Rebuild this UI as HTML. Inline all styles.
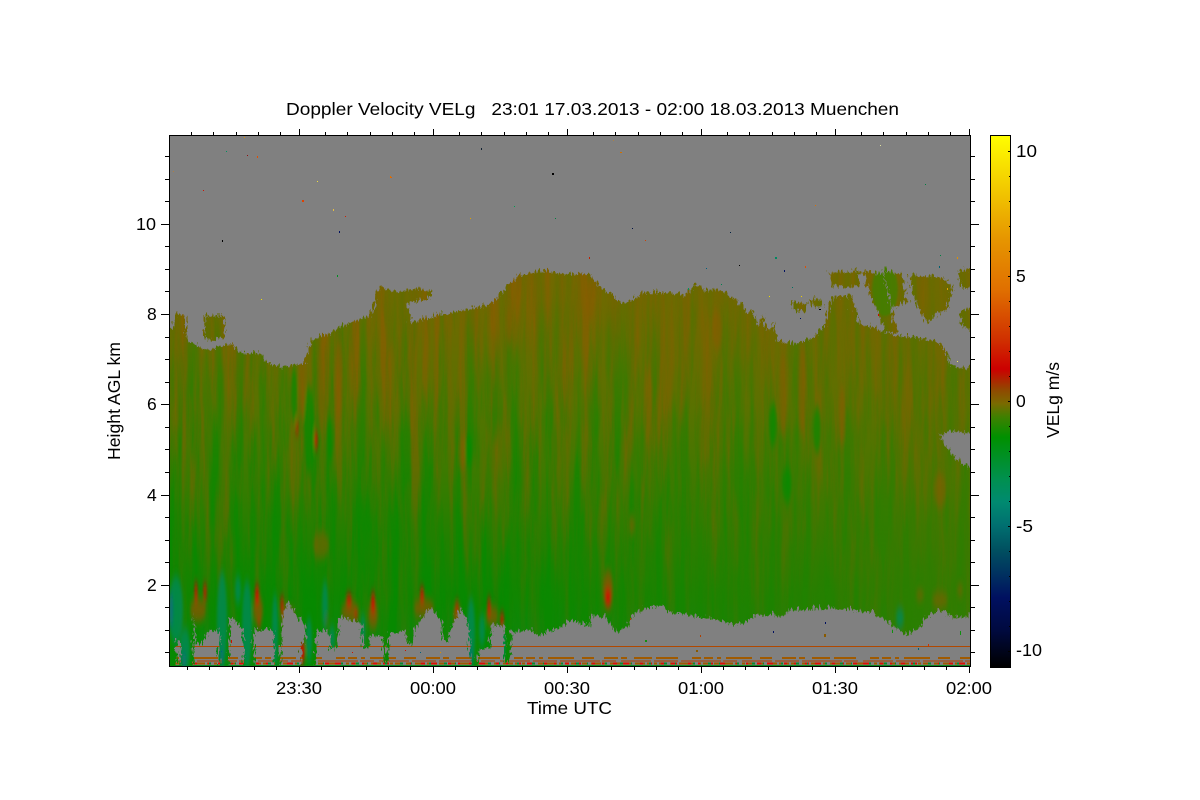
<!DOCTYPE html>
<html><head><meta charset="utf-8"><title>Doppler Velocity</title>
<style>html,body{margin:0;padding:0;background:#fff;width:1200px;height:800px;overflow:hidden}svg{display:block}text{font-family:"Liberation Sans",sans-serif;font-size:17.5px;fill:#000}</style>
</head><body>
<svg width="1200" height="800" viewBox="0 0 1200 800" xmlns="http://www.w3.org/2000/svg">
<defs>
<linearGradient id="base" x1="0" y1="260" x2="0" y2="666" gradientUnits="userSpaceOnUse">
<stop offset="0" stop-color="#746800"/><stop offset=".2" stop-color="#686c00"/><stop offset=".35" stop-color="#587200"/><stop offset=".52" stop-color="#3c7a00"/><stop offset=".68" stop-color="#228000"/><stop offset=".82" stop-color="#0f8600"/><stop offset="1" stop-color="#058a10"/>
</linearGradient>
<linearGradient id="galpha" x1="0" y1="300" x2="0" y2="600" gradientUnits="userSpaceOnUse">
<stop offset="0" stop-color="#000" stop-opacity=".15"/><stop offset=".45" stop-color="#000" stop-opacity=".6"/><stop offset="1" stop-color="#000" stop-opacity=".9"/>
</linearGradient>
<linearGradient id="balpha" x1="0" y1="300" x2="0" y2="600" gradientUnits="userSpaceOnUse">
<stop offset="0" stop-color="#000" stop-opacity=".9"/><stop offset=".5" stop-color="#000" stop-opacity=".55"/><stop offset="1" stop-color="#000" stop-opacity=".2"/>
</linearGradient>
<linearGradient id="rightolive" x1="500" y1="0" x2="970" y2="0" gradientUnits="userSpaceOnUse">
<stop offset="0" stop-color="#6a6c00" stop-opacity="0"/><stop offset="1" stop-color="#6a6c00" stop-opacity=".4"/>
</linearGradient>
<linearGradient id="cb" x1="0" y1="135" x2="0" y2="667" gradientUnits="userSpaceOnUse">
<stop offset="0" stop-color="#ffff00"/><stop offset=".197" stop-color="#e69500"/><stop offset=".29" stop-color="#e07000"/><stop offset=".385" stop-color="#d03000"/><stop offset=".44" stop-color="#cc0000"/><stop offset=".48" stop-color="#8f4a00"/><stop offset=".505" stop-color="#7a6a00"/><stop offset=".53" stop-color="#3f8000"/><stop offset=".568" stop-color="#009000"/><stop offset=".648" stop-color="#009050"/><stop offset=".69" stop-color="#008a70"/><stop offset=".733" stop-color="#007070"/><stop offset=".78" stop-color="#005060"/><stop offset=".827" stop-color="#003060"/><stop offset=".87" stop-color="#001060"/><stop offset=".93" stop-color="#000a40"/><stop offset="1" stop-color="#000000"/>
</linearGradient>
<filter id="bn" filterUnits="userSpaceOnUse" x="169" y="135" width="802" height="532" color-interpolation-filters="sRGB">
<feTurbulence type="fractalNoise" baseFrequency="0.1 0.006" numOctaves="4" seed="4"/>
<feColorMatrix values="0 0 0 0 .52  0 0 0 0 .37  0 0 0 0 0  3.2 0 0 0 -1.25"/>
<feComposite in2="SourceAlpha" operator="in"/>
</filter>
<filter id="gn" filterUnits="userSpaceOnUse" x="169" y="135" width="802" height="532" color-interpolation-filters="sRGB">
<feTurbulence type="fractalNoise" baseFrequency="0.09 0.007" numOctaves="4" seed="17"/>
<feColorMatrix values="0 0 0 0 .02  0 0 0 0 .54  0 0 0 0 0  3.2 0 0 0 -1.25"/>
<feComposite in2="SourceAlpha" operator="in"/>
</filter>
<filter id="rag" filterUnits="userSpaceOnUse" x="0" y="0" width="1200" height="800">
<feTurbulence type="turbulence" baseFrequency="0.32 0.11" numOctaves="2" seed="8" result="n"/>
<feDisplacementMap in="SourceGraphic" in2="n" scale="10" xChannelSelector="R" yChannelSelector="G"/>
</filter>
<filter id="bv" filterUnits="userSpaceOnUse" x="0" y="0" width="1200" height="800"><feGaussianBlur stdDeviation="1.3 5"/></filter>
<filter id="bs" filterUnits="userSpaceOnUse" x="0" y="0" width="1200" height="800"><feGaussianBlur stdDeviation="1"/></filter>
<mask id="echo" maskUnits="userSpaceOnUse" x="0" y="0" width="1200" height="800">
<g filter="url(#rag)" fill="#fff">
<polygon points="169,327 174,310 184,313 184,335 202,348 212,345 229,340 239,350 256,350 266,360 279,365 302,360 309,337 329,330 346,320 369,313 376,284 395,289 410,286 428,288 428,294 405,302 410,320 436,312 489,302 496,293 516,273 540,268 569,272 580,270 590,275 603,290 623,300 643,290 667,290 683,293 693,280 703,288 717,287 733,297 740,303 745,312 750,306 755,323 760,310 765,329 771,320 775,338 787,341 807,338 823,322 830,295 848,293 857,320 890,332 933,338 943,347 947,362 975,368 975,612 950,615 937,607 923,615 917,625 903,632 887,620 870,610 830,605 787,608 777,613 752,612 743,620 730,622 703,615 670,610 658,602 640,607 630,612 625,623 615,630 603,615 590,612 587,623 569,618 556,625 536,633 529,627 509,630 507,660 501,660 502,623 489,622 487,645 476,647 474,672 469,672 466,622 459,605 447,627 446,638 441,638 439,617 426,605 412,627 409,643 407,643 402,630 386,630 385,660 381,660 379,633 367,633 366,645 361,645 359,620 336,615 335,647 329,647 328,630 314,627 313,672 299,672 298,640 304,640 303,622 284,600 279,620 278,672 271,672 271,627 252,627 252,672 241,672 241,627 227,615 227,672 217,672 217,627 206,628 199,642 193,642 191,610 190,672 179,672 178,637 174,637 174,672 165,672 165,327"/>
<polygon points="202,313 222,313 222,335 210,338 202,335"/>
<polygon points="827,270 857,268 857,283 830,285"/>
<polygon points="860,268 880,272 895,330 885,330 870,300"/>
<polygon points="880,268 900,272 905,300 890,305"/>
<polygon points="907,272 940,275 950,285 945,305 925,320 910,295"/>
<polygon points="957,308 975,306 975,332 960,322"/>
<polygon points="955,268 975,266 975,285 960,285"/>
<polygon points="790,300 803,301 802,309 792,309"/>
<polygon points="808,297 820,296 821,303 810,304"/>
</g>
<polygon points="937,433 950,428 975,432 975,470 955,458 945,445" fill="#000" filter="url(#rag)"/>
</mask>
<clipPath id="plot"><rect x="170" y="136" width="800" height="530"/></clipPath>
</defs>
<rect width="1200" height="800" fill="#fff"/>
<g clip-path="url(#plot)">
<rect x="169" y="135" width="802" height="532" fill="#808080"/>
<!-- range-gate artifacts -->
<rect x="175" y="646" width="795" height="1" fill="#b04800"/>
<g fill="none" shape-rendering="crispEdges">
<line x1="170" x2="970" y1="658" y2="658" stroke="#a05a00" stroke-width="2" stroke-dasharray="9 4 4 5 26 8 12 10 14 3 6 7 18 4 22 14 9 3"/>
<line x1="170" x2="970" y1="661" y2="661" stroke="#b04000" stroke-width="1" stroke-dasharray="24 3 40 2 14 5 30 3"/>
<line x1="170" x2="970" y1="663.5" y2="663.5" stroke="#a05a00" stroke-width="2" stroke-dasharray="3 2 8 3 5 4 10 2 4 3"/>
<line x1="170" x2="970" y1="663.5" y2="663.5" stroke="#dd1100" stroke-width="2" stroke-dasharray="2 9 4 6 6 11 3 7"/>
<line x1="170" x2="970" y1="663.5" y2="663.5" stroke="#0a8a30" stroke-width="2" stroke-dasharray="2 13 3 8 1 17" stroke-dashoffset="5"/>
<line x1="170" x2="970" y1="665.5" y2="665.5" stroke="#0a8a20" stroke-width="1"/>
</g>
<!-- echo -->
<g mask="url(#echo)">
<rect x="169" y="135" width="802" height="532" fill="url(#base)"/>
<rect x="169" y="135" width="802" height="532" fill="url(#balpha)" filter="url(#bn)"/>
<rect x="169" y="135" width="802" height="532" fill="url(#galpha)" filter="url(#gn)"/>
<rect x="500" y="260" width="471" height="407" fill="url(#rightolive)"/>
<g filter="url(#bv)">
<!-- brown streaks -->
<g fill="#8a5a00" opacity=".55">
<ellipse cx="321" cy="385" rx="4" ry="48"/><ellipse cx="339" cy="380" rx="4" ry="40"/><ellipse cx="302" cy="390" rx="3" ry="28"/>
<ellipse cx="783" cy="395" rx="4" ry="42"/><ellipse cx="802" cy="390" rx="4" ry="45"/><ellipse cx="842" cy="415" rx="3" ry="30"/>
<ellipse cx="590" cy="300" rx="4" ry="22"/><ellipse cx="717" cy="330" rx="5" ry="20"/><ellipse cx="509" cy="325" rx="3" ry="20"/>
<ellipse cx="462" cy="452" rx="3" ry="18"/><ellipse cx="321" cy="545" rx="8" ry="14"/><ellipse cx="940" cy="490" rx="6" ry="18"/>
<ellipse cx="940" cy="600" rx="8" ry="8"/><ellipse cx="960" cy="590" rx="3" ry="6"/><ellipse cx="920" cy="595" rx="4" ry="6"/>
<ellipse cx="632" cy="525" rx="3" ry="10"/>
</g>
<!-- green streaks -->
<g fill="#008c00" opacity=".7">
<ellipse cx="294" cy="395" rx="3" ry="28"/><ellipse cx="309" cy="430" rx="5" ry="44"/><ellipse cx="817" cy="430" rx="4" ry="24"/><ellipse cx="773" cy="425" rx="4" ry="22"/>
<ellipse cx="469" cy="450" rx="4" ry="16"/><ellipse cx="787" cy="485" rx="5" ry="18"/><ellipse cx="330" cy="440" rx="3" ry="22"/>
</g>
<!-- brown fringes above arches -->
<g fill="#8e5200" opacity=".75">
<ellipse cx="198" cy="610" rx="8" ry="12"/><ellipse cx="258" cy="610" rx="5" ry="14"/><ellipse cx="288" cy="616" rx="7" ry="10"/><ellipse cx="350" cy="612" rx="9" ry="10"/><ellipse cx="373" cy="615" rx="5" ry="14"/><ellipse cx="424" cy="608" rx="10" ry="10"/><ellipse cx="457" cy="615" rx="4" ry="12"/><ellipse cx="492" cy="616" rx="6" ry="10"/><ellipse cx="608" cy="590" rx="5" ry="20"/>
</g>
<!-- red cores -->
<g fill="#cc1000">
<ellipse cx="196" cy="592" rx="1.5" ry="10"/><ellipse cx="205" cy="592" rx="1.5" ry="9"/><ellipse cx="257" cy="595" rx="2" ry="10"/><ellipse cx="282" cy="605" rx="1.5" ry="9"/><ellipse cx="349" cy="600" rx="3" ry="6"/><ellipse cx="373" cy="603" rx="2" ry="11"/><ellipse cx="422" cy="595" rx="2" ry="8"/><ellipse cx="457" cy="607" rx="1.5" ry="6"/><ellipse cx="489" cy="607" rx="1.5" ry="10"/><ellipse cx="502" cy="620" rx="2" ry="7"/><ellipse cx="326" cy="620" rx="1.5" ry="5"/><ellipse cx="356" cy="615" rx="1.5" ry="5"/><ellipse cx="259" cy="623" rx="1.5" ry="4"/><ellipse cx="316" cy="440" rx="1.5" ry="10"/><ellipse cx="297" cy="428" rx="1" ry="7"/><ellipse cx="302" cy="652" rx="3" ry="11"/><ellipse cx="608" cy="597" rx="3" ry="9"/>
</g>
<!-- teal drips -->
<g fill="#058a55" opacity=".8">
<ellipse cx="176" cy="610" rx="7" ry="34"/><ellipse cx="185" cy="650" rx="5" ry="22"/><ellipse cx="222" cy="620" rx="5" ry="48"/><ellipse cx="247" cy="625" rx="5" ry="44"/><ellipse cx="275" cy="630" rx="3" ry="36"/><ellipse cx="325" cy="605" rx="3" ry="24"/><ellipse cx="332" cy="638" rx="3" ry="12"/><ellipse cx="363" cy="630" rx="2.5" ry="16"/><ellipse cx="471" cy="632" rx="4" ry="34"/><ellipse cx="482" cy="630" rx="3" ry="16"/><ellipse cx="503" cy="645" rx="2.5" ry="16"/><ellipse cx="238" cy="590" rx="3" ry="14"/><ellipse cx="900" cy="618" rx="4" ry="10"/><ellipse cx="309" cy="640" rx="3" ry="22"/>
</g>
<g fill="#086a80" opacity=".8">
<ellipse cx="171" cy="610" rx="2" ry="18"/><ellipse cx="184" cy="660" rx="2" ry="7"/><ellipse cx="222" cy="657" rx="1.5" ry="9"/><ellipse cx="471" cy="657" rx="1.5" ry="9"/>
</g>
</g>
<!-- greener upper-right cloud strips -->
<ellipse cx="885" cy="290" rx="13" ry="26" fill="#3f8000" opacity=".8" filter="url(#bs)"/>
</g>
<!-- specks -->
<g shape-rendering="crispEdges">
<rect x="244" y="137" width="1" height="1" fill="#e09000"/><rect x="226" y="151" width="1" height="1" fill="#009060"/><rect x="247" y="155" width="1" height="1" fill="#901010"/><rect x="257" y="156" width="1" height="2" fill="#e05000"/><rect x="173" y="171" width="1" height="1" fill="#b08040"/><rect x="203" y="190" width="1" height="1" fill="#d01000"/><rect x="317" y="181" width="1" height="1" fill="#f0e040"/><rect x="302" y="200" width="2" height="2" fill="#e04000"/><rect x="333" y="209" width="1" height="2" fill="#e8c040"/><rect x="345" y="216" width="1" height="1" fill="#d02000"/><rect x="339" y="231" width="1" height="2" fill="#001060"/><rect x="390" y="176" width="1" height="2" fill="#e07000"/>
<rect x="552" y="173" width="2" height="2" fill="#000"/><rect x="481" y="148" width="1" height="2" fill="#102030"/><rect x="620" y="152" width="2" height="1" fill="#d07000"/><rect x="613" y="140" width="1" height="1" fill="#b08040"/><rect x="222" y="240" width="1" height="2" fill="#000"/><rect x="880" y="145" width="1" height="1" fill="#e0e0a0"/><rect x="925" y="184" width="1" height="1" fill="#008040"/><rect x="632" y="228" width="1" height="1" fill="#001040"/><rect x="555" y="218" width="1" height="1" fill="#008040"/><rect x="514" y="206" width="1" height="1" fill="#00a050"/><rect x="645" y="240" width="1" height="1" fill="#d04000"/><rect x="815" y="205" width="1" height="1" fill="#e07000"/><rect x="391" y="177" width="1" height="1" fill="#e06000"/><rect x="730" y="232" width="1" height="1" fill="#002040"/><rect x="470" y="218" width="1" height="1" fill="#e0a000"/>
<rect x="589" y="257" width="1" height="2" fill="#c02000"/><rect x="775" y="257" width="2" height="2" fill="#008860"/><rect x="706" y="268" width="1" height="1" fill="#006080"/><rect x="739" y="265" width="1" height="1" fill="#000"/><rect x="784" y="270" width="1" height="2" fill="#001060"/><rect x="805" y="266" width="1" height="2" fill="#e05000"/><rect x="940" y="255" width="1" height="1" fill="#008040"/><rect x="939" y="266" width="1" height="2" fill="#006070"/><rect x="957" y="257" width="1" height="2" fill="#e09000"/><rect x="947" y="288" width="1" height="2" fill="#e0a000"/><rect x="957" y="361" width="1" height="1" fill="#f0f060"/><rect x="769" y="296" width="1" height="1" fill="#f0e000"/><rect x="801" y="296" width="1" height="1" fill="#f0d000"/><rect x="819" y="309" width="2" height="1" fill="#000"/><rect x="800" y="318" width="1" height="1" fill="#001060"/><rect x="878" y="314" width="1" height="2" fill="#c01000"/><rect x="688" y="288" width="1" height="2" fill="#009060"/><rect x="721" y="284" width="1" height="1" fill="#008050"/><rect x="792" y="287" width="1" height="1" fill="#007060"/><rect x="337" y="275" width="1" height="2" fill="#009020"/><rect x="261" y="299" width="1" height="1" fill="#f0e000"/>
<rect x="825" y="622" width="1" height="2" fill="#001060"/><rect x="773" y="631" width="1" height="2" fill="#001060"/><rect x="645" y="640" width="2" height="2" fill="#109010"/><rect x="700" y="635" width="1" height="2" fill="#b04000"/><rect x="824" y="634" width="2" height="3" fill="#8a5a00"/><rect x="696" y="650" width="2" height="2" fill="#8a5a00"/><rect x="960" y="631" width="1" height="4" fill="#109010"/><rect x="892" y="630" width="1" height="3" fill="#109010"/><rect x="918" y="648" width="1" height="2" fill="#006070"/><rect x="928" y="644" width="1" height="2" fill="#d03000"/><rect x="630" y="618" width="1" height="2" fill="#b04000"/><rect x="678" y="613" width="1" height="1" fill="#109010"/>
<rect x="221" y="651" width="1" height="1" fill="#006080"/><rect x="352" y="652" width="1" height="1" fill="#cc1000"/><rect x="420" y="652" width="1" height="1" fill="#006080"/><rect x="231" y="640" width="1" height="3" fill="#cc1000"/><rect x="405" y="650" width="1" height="1" fill="#cc1000"/><rect x="440" y="652" width="1" height="1" fill="#e09000"/>
</g>
</g>
<!-- frame -->
<g fill="none" stroke="#000" stroke-width="1" shape-rendering="crispEdges">
<rect x="169.5" y="135.5" width="801" height="531"/>
<path d="M191.5 135v-3M213.5 135v-3M236.5 135v-3M258.5 135v-3M280.5 135v-3M299.5 135v-6M325.5 135v-3M347.5 135v-3M370.5 135v-3M392.5 135v-3M414.5 135v-3M433.5 135v-6M459.5 135v-3M481.5 135v-3M504.5 135v-3M526.5 135v-3M548.5 135v-3M567.5 135v-6M593.5 135v-3M615.5 135v-3M638.5 135v-3M660.5 135v-3M682.5 135v-3M701.5 135v-6M727.5 135v-3M749.5 135v-3M772.5 135v-3M794.5 135v-3M816.5 135v-3M835.5 135v-6M861.5 135v-3M883.5 135v-3M906.5 135v-3M928.5 135v-3M950.5 135v-3M969.5 135v-6"/>
<path d="M187.5 667v3M209.5 667v3M232.5 667v3M254.5 667v3M276.5 667v3M299.5 667v6M321.5 667v3M343.5 667v3M366.5 667v3M388.5 667v3M410.5 667v3M433.5 667v6M455.5 667v3M477.5 667v3M500.5 667v3M522.5 667v3M544.5 667v3M567.5 667v6M589.5 667v3M611.5 667v3M634.5 667v3M656.5 667v3M678.5 667v3M701.5 667v6M723.5 667v3M745.5 667v3M768.5 667v3M790.5 667v3M812.5 667v3M835.5 667v6M857.5 667v3M879.5 667v3M902.5 667v3M924.5 667v3M946.5 667v3M969.5 667v6"/>
<path d="M169 156.5h-4M169 179.5h-4M169 201.5h-4M169 224.5h-8M169 246.5h-4M169 269.5h-4M169 291.5h-4M169 314.5h-8M169 337.5h-4M169 359.5h-4M169 382.5h-4M169 404.5h-8M169 427.5h-4M169 449.5h-4M169 472.5h-4M169 495.5h-8M169 517.5h-4M169 540.5h-4M169 562.5h-4M169 585.5h-8M169 607.5h-4M169 630.5h-4M169 652.5h-4"/>
<path d="M971 156.5h4M971 179.5h4M971 201.5h4M971 224.5h8M971 246.5h4M971 269.5h4M971 291.5h4M971 314.5h8M971 337.5h4M971 359.5h4M971 382.5h4M971 404.5h8M971 427.5h4M971 449.5h4M971 472.5h4M971 495.5h8M971 517.5h4M971 540.5h4M971 562.5h4M971 585.5h8M971 607.5h4M971 630.5h4M971 652.5h4"/>
</g>
<!-- colorbar -->
<rect x="990.5" y="135.5" width="20" height="532" fill="url(#cb)" stroke="#000" stroke-width="1" shape-rendering="crispEdges"/>
<path d="M1010 151.5h-2M1010 176.5h-1M1010 201.5h-1M1010 226.5h-1M1010 251.5h-1M1010 276.5h-2M1010 301.5h-1M1010 326.5h-1M1010 351.5h-1M1010 376.5h-1M1010 401.5h-2M1010 426.5h-1M1010 451.5h-1M1010 476.5h-1M1010 501.5h-1M1010 526.5h-2M1010 551.5h-1M1010 576.5h-1M1010 601.5h-1M1010 626.5h-1M1010 651.5h-2" stroke="#000" fill="none" shape-rendering="crispEdges"/>
<!-- text -->
<text x="286" y="115" textLength="613" lengthAdjust="spacingAndGlyphs" xml:space="preserve">Doppler Velocity VELg   23:01 17.03.2013 - 02:00 18.03.2013 Muenchen</text>
<text x="136" y="230" textLength="20" lengthAdjust="spacingAndGlyphs">10</text>
<text x="147" y="320">8</text>
<text x="147" y="410">6</text>
<text x="147" y="501">4</text>
<text x="147" y="591">2</text>
<text x="276" y="694" textLength="46" lengthAdjust="spacingAndGlyphs">23:30</text>
<text x="410" y="694" textLength="46" lengthAdjust="spacingAndGlyphs">00:00</text>
<text x="544" y="694" textLength="46" lengthAdjust="spacingAndGlyphs">00:30</text>
<text x="678" y="694" textLength="46" lengthAdjust="spacingAndGlyphs">01:00</text>
<text x="812" y="694" textLength="46" lengthAdjust="spacingAndGlyphs">01:30</text>
<text x="946" y="694" textLength="46" lengthAdjust="spacingAndGlyphs">02:00</text>
<text x="527" y="714" textLength="85" lengthAdjust="spacingAndGlyphs">Time UTC</text>
<text transform="translate(120,460) rotate(-90)" textLength="118" lengthAdjust="spacingAndGlyphs">Height AGL km</text>
<text transform="translate(1059,438) rotate(-90)" textLength="76" lengthAdjust="spacingAndGlyphs">VELg m/s</text>
<text x="1016" y="157" textLength="21" lengthAdjust="spacingAndGlyphs">10</text>
<text x="1016" y="282">5</text>
<text x="1016" y="407">0</text>
<text x="1016" y="532" textLength="17" lengthAdjust="spacingAndGlyphs">-5</text>
<text x="1016" y="656" textLength="26" lengthAdjust="spacingAndGlyphs">-10</text>
</svg>
</body></html>
